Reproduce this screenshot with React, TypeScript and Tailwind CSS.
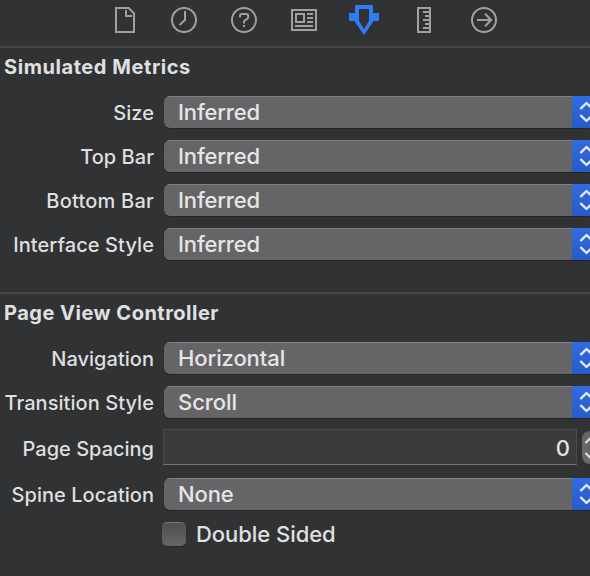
import type { ReactNode } from "react";

const labelBase =
  "w-[154px] shrink-0 whitespace-nowrap text-right text-[20px] leading-8 font-[450] text-[#dfdfdf] pt-px";

function Label({ text, spacing }: { text: string; spacing: string }) {
  return <span className={`${labelBase} ${spacing}`}>{text}</span>;
}

function Chevrons() {
  return (
    <svg className="h-8 w-[18px]" viewBox="0 0 18 32" fill="none" stroke="#e6ebf7" strokeWidth="2.3" strokeLinecap="round" strokeLinejoin="round">
      <path d="M9 12.3 14.5 7 20 12.3M9 19.7 14.5 25 20 19.7" />
    </svg>
  );
}

function PopUp({ value, spacing }: { value: string; spacing: string }) {
  return (
    <div className="ml-2.5 flex h-8 min-w-0 flex-1 overflow-hidden rounded-l-md bg-[#656567] shadow-[0_1px_1px_#242526]">
      <span className={`flex-1 border-t border-[#828284] pl-3.5 text-[22px] leading-[31px] font-[450] text-[#e6e6e6] ${spacing}`}>{value}</span>
      <span className="w-[18px] shrink-0 overflow-hidden bg-linear-to-b from-[#336be0] to-[#265bc9]">
        <Chevrons />
      </span>
    </div>
  );
}

function Row({ label, ls, value, vs }: { label: string; ls: string; value: string; vs: string }) {
  return (
    <div className="flex h-8">
      <Label text={label} spacing={ls} />
      <PopUp value={value} spacing={vs} />
    </div>
  );
}

function Icon({ children, active = false }: { children: ReactNode; active?: boolean }) {
  return (
    <svg className={`h-10 w-[60px] ${active ? "text-[#307bf6]" : "text-[#a0a0a1]"}`} viewBox="0 0 60 40" fill="none" stroke="currentColor" strokeWidth="2">
      {children}
    </svg>
  );
}

function Toolbar() {
  return (
    <div className="flex h-[46px] pl-[94px]">
      <Icon>
        <path d="M22 8h12.6L40 13.4V32H22Z" />
        <path d="M32 10v6h6" />
      </Icon>
      <Icon>
        <circle cx="30" cy="20" r="12" />
        <path d="M31 11v9l-5.5 5" />
      </Icon>
      <Icon>
        <circle cx="30" cy="20" r="12" />
        <path d="M26 17.3V16q0-2 2-2h4.2q2 0 2 2v1.3q0 1.2-1.5 2L31 20.2q-1 .7-1 1.8v1.4M30 25v2" />
      </Icon>
      <Icon>
        <path d="M18 10h24v20H18ZM22 14h8v8h-8ZM33 14h6M33 18h6M33 22h6M21 26h18" />
      </Icon>
      <Icon active>
        <path d="M21 5h18v8h6v8h-6v1L30 35 21 22v-1h-6v-8h6ZM25 9v12l5 8 5-8V9Z" fill="currentColor" fillRule="evenodd" stroke="none" />
      </Icon>
      <Icon>
        <path d="M24 8h12v24H24ZM29 12h6M31 16h4M29 20h6M31 24h4M29 28h6" />
      </Icon>
      <Icon>
        <circle cx="30" cy="20" r="12" />
        <path d="M23 20h13M31 13.8 37.2 20 31 26.2" />
      </Icon>
    </div>
  );
}

function Heading({ text, spacing }: { text: string; spacing: string }) {
  return <h2 className={`pl-1 text-[20px] leading-[30px] font-bold text-[#e0e0e0] ${spacing}`}>{text}</h2>;
}

export default function App() {
  return (
    <main className="h-[576px] w-[590px] overflow-hidden bg-[#313234] font-['Inter',sans-serif]">
      <Toolbar />
      <section className="h-[246px] border-t-2 border-[#47474a] pt-1">
        <Heading text="Simulated Metrics" spacing="tracking-[0.57px]" />
        <div className="mt-3.5 flex flex-col gap-3">
          <Row label="Size" ls="tracking-[0.05px]" value="Inferred" vs="tracking-[-0.17px]" />
          <Row label="Top Bar" ls="tracking-[0.05px]" value="Inferred" vs="tracking-[-0.17px]" />
          <Row label="Bottom Bar" ls="tracking-[0.22px]" value="Inferred" vs="tracking-[-0.17px]" />
          <Row label="Interface Style" ls="tracking-[0.08px]" value="Inferred" vs="tracking-[-0.17px]" />
        </div>
      </section>
      <section className="border-t-2 border-[#47474a] pt-1">
        <Heading text="Page View Controller" spacing="tracking-[0.5px]" />
        <div className="mt-3.5 flex flex-col gap-3">
          <Row label="Navigation" ls="tracking-[0.03px]" value="Horizontal" vs="tracking-[-0.1px]" />
          <Row label="Transition Style" ls="tracking-[0.06px]" value="Scroll" vs="tracking-[-0.06px]" />
        </div>
        <div className="mt-[11px] mb-[13px] flex h-9">
          <span className="pt-[3px]"><Label text="Page Spacing" spacing="tracking-[0px] inline-block" /></span>
          <div className="ml-[9px] w-[414px] shrink-0 border border-[#4b4b4d] border-b-[#777779] bg-[#3b3b3c] pr-1.5 text-right text-[22px] leading-9 font-[450] text-[#e2e2e2]">0</div>
          <div className="ml-[5px] mt-0.5 h-[33px] w-2 overflow-hidden rounded-l-lg bg-linear-to-b from-[#656567] to-[#69696b]">
            <svg className="h-[33px] w-2" viewBox="0 0 8 33" fill="none" stroke="#e4e4e4" strokeWidth="2" strokeLinecap="round">
              <path d="M4 11.5 9.5 6M4 22.5 9.5 28" />
            </svg>
          </div>
        </div>
        <Row label="Spine Location" ls="tracking-[0.04px]" value="None" vs="tracking-[-0.15px]" />
        <div className="mt-3 flex h-6 items-center pl-[162px]">
          <span className="size-6 rounded-[5px] border-t border-[#77777a] bg-linear-to-b from-[#505052] to-[#666668] shadow-[0_1px_1px_#242526]" />
          <span className="ml-2.5 text-[22px] leading-6 font-[450] text-[#e0e0e0] tracking-[-0.05px]">Double Sided</span>
        </div>
      </section>
    </main>
  );
}
